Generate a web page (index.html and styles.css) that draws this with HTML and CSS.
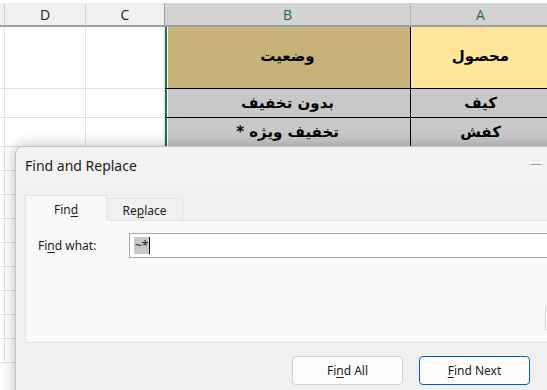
FILE: index.html
```html
<!DOCTYPE html>
<html lang="fa">
<head>
    <meta charset="UTF-8">
    <meta name="viewport" content="width=device-width, initial-scale=1.0">
    <title>Find and Replace</title>
    <link rel="stylesheet" href="styles.css">
</head>
<body>
    <div class="sheet">
        <div class="col-head corner"></div>
        <div class="col-head">D</div>
        <div class="col-head">C</div>
        <div class="col-head picked">B</div>
        <div class="col-head picked">A</div>

        <div class="cell rowhead"></div>
        <div class="cell"></div>
        <div class="cell"></div>
        <div class="cell data title-b" dir="rtl">وضعیت</div>
        <div class="cell data title-a" dir="rtl">محصول</div>

        <div class="cell rowhead"></div>
        <div class="cell"></div>
        <div class="cell"></div>
        <div class="cell data row-data" dir="rtl">بدون تخفیف</div>
        <div class="cell data row-data" dir="rtl">کیف</div>

        <div class="cell rowhead"></div>
        <div class="cell"></div>
        <div class="cell"></div>
        <div class="cell data row-data" dir="rtl">تخفیف ویژه *</div>
        <div class="cell data row-data" dir="rtl">کفش</div>

        <div class="cell rowhead"></div><div class="cell"></div><div class="cell"></div><div class="cell data row-data"></div><div class="cell data row-data"></div>
        <div class="cell rowhead"></div><div class="cell"></div><div class="cell"></div><div class="cell data row-data"></div><div class="cell data row-data"></div>
        <div class="cell rowhead"></div><div class="cell"></div><div class="cell"></div><div class="cell data row-data"></div><div class="cell data row-data"></div>
        <div class="cell rowhead"></div><div class="cell"></div><div class="cell"></div><div class="cell data row-data"></div><div class="cell data row-data"></div>
        <div class="cell rowhead"></div><div class="cell"></div><div class="cell"></div><div class="cell data row-data"></div><div class="cell data row-data"></div>
        <div class="cell rowhead"></div><div class="cell"></div><div class="cell"></div><div class="cell data row-data"></div><div class="cell data row-data"></div>
        <div class="cell rowhead"></div><div class="cell"></div><div class="cell"></div><div class="cell data row-data"></div><div class="cell data row-data"></div>
        <div class="cell rowhead"></div><div class="cell"></div><div class="cell"></div><div class="cell data row-data"></div><div class="cell data row-data"></div>
        <div class="cell rowhead"></div><div class="cell"></div><div class="cell"></div><div class="cell data row-data"></div><div class="cell data row-data"></div>
    </div>

    <div class="dialog">
        <div class="titlebar">
            <span class="title">Find and Replace</span>
            <span class="min-btn"></span>
        </div>
        <div class="dialog-body">
            <div class="tabs">
                <div class="tab active">Fin<u>d</u></div>
                <div class="tab">Re<u>p</u>lace</div>
            </div>
            <div class="panel">
                <div class="field">
                    <label class="field-label">Fi<u>n</u>d what:</label>
                    <div class="input"><span class="sel">~*</span><span class="caret"></span></div>
                </div>
                <div class="options-row">
                    <span class="btn options-btn"></span>
                </div>
            </div>
            <div class="actions">
                <span class="btn">Fi<u>n</u>d All</span>
                <span class="btn default"><u>F</u>ind Next</span>
            </div>
        </div>
    </div>
</body>
</html>
```

FILE: styles.css
```css
body {
    margin: 0;
    background: #fff;
    overflow: hidden;
    font-family: "Noto Sans", sans-serif;
}

.sheet {
    display: grid;
    grid-template-columns: 5px 81px 79px 246px 140px;
    grid-template-rows: 24px 62px 29px 29px repeat(9, 24px);
    padding-top: 3px;
}

.col-head {
    background: #f0f0f0;
    border-right: 1px solid #d4d4d4;
    border-bottom: 2px solid #9e9e9e;
    display: flex;
    align-items: center;
    justify-content: center;
    font-family: "Open Sans", sans-serif;
    font-size: 14px;
    color: #222;
    box-sizing: border-box;
}

.col-head.picked {
    background: #d3d3d3;
    color: #1e6b41;
    border-right-color: #b4b4b4;
}

.col-head:nth-child(3) {
    border-right-color: #a0a0a0;
}

.cell {
    background: #fff;
    border-right: 1px solid #e1e1e1;
    border-bottom: 1px solid #e1e1e1;
    box-sizing: border-box;
}

.cell.data {
    background: #c8c8c8;
    border-right: 1px solid #000;
    border-bottom: 1px solid #000;
    display: flex;
    align-items: center;
    justify-content: center;
    font-family: "DejaVu Sans", sans-serif;
    font-size: 15px;
    font-weight: bold;
    color: #000;
}

.cell.data:nth-child(5n+4) {
    box-shadow: inset 2px 0 #217346, inset 3px 0 #fff;
}

.title-b {
    background: #c7b37a !important;
    padding-bottom: 4px;
}

.title-a {
    background: #ffe699 !important;
    padding-bottom: 4px;
}

/* dialog over the sheet */
.dialog {
    position: absolute;
    left: 15px;
    top: 146px;
    width: 600px;
    height: 270px;
    background: #f0f0f0;
    border: 1px solid #c4c4c4;
    border-radius: 8px;
    box-shadow: 0 0 14px rgba(0, 0, 0, 0.28);
    overflow: hidden;
    color: #1b1b1b;
}

.titlebar {
    height: 36px;
    background: #f3f3f3;
    display: flex;
    align-items: center;
    padding-left: 9px;
}

.title {
    flex: 1;
    font-size: 14px;
}

.min-btn {
    width: 12px;
    height: 1px;
    background: #a6a6a6;
    margin-right: 74px;
    margin-top: -2px;
}

.dialog-body {
    padding: 12px 0 0 9px;
}

.tabs {
    display: flex;
    align-items: flex-end;
    height: 25px;
}

.tab {
    width: 76px;
    height: 22px;
    background: #f0f0f0;
    border: 1px solid #e3e3e3;
    border-bottom: none;
    border-left: none;
    display: flex;
    align-items: center;
    justify-content: center;
    font-size: 12px;
    padding-top: 1px;
    box-sizing: border-box;
}

.tab.active {
    width: 82px;
    background: #f9f9f9;
    border-left: 1px solid #e3e3e3;
    position: relative;
    z-index: 1;
    margin-bottom: -1px;
    height: 26px;
}

.panel {
    height: 123px;
    background: #f9f9f9;
    border: 1px solid #e3e3e3;
    box-sizing: border-box;
    padding: 12px 0 0 12px;
    margin-right: 20px;
}

.field {
    display: flex;
    align-items: center;
}

.field-label {
    width: 91px;
    font-size: 12px;
}

.input {
    flex: 1;
    height: 25px;
    background: #fff;
    border: 1px solid #a8a8a8;
    box-sizing: border-box;
    display: flex;
    align-items: center;
    padding-left: 4px;
}

.sel {
    background: #c8c8c8;
    font-size: 12px;
    line-height: 17px;
    padding: 0 1px;
}

.caret {
    width: 1px;
    height: 17px;
    background: #000;
}

.options-row {
    margin-top: 47px;
    padding-left: 507px;
}

.btn {
    display: inline-flex;
    align-items: center;
    justify-content: center;
    width: 111px;
    height: 29px;
    background: #fdfdfd;
    border: 1px solid #d0d0d0;
    border-radius: 4px;
    box-sizing: border-box;
    font-size: 12px;
    color: #1b1b1b;
}

.options-btn {
    height: 26px;
    vertical-align: top;
}

.actions {
    display: flex;
    gap: 16px;
    margin-top: 13px;
    padding-left: 267px;
}

.btn.default {
    border-color: #005fb8;
}

u {
    text-underline-offset: 2px;
}
```
